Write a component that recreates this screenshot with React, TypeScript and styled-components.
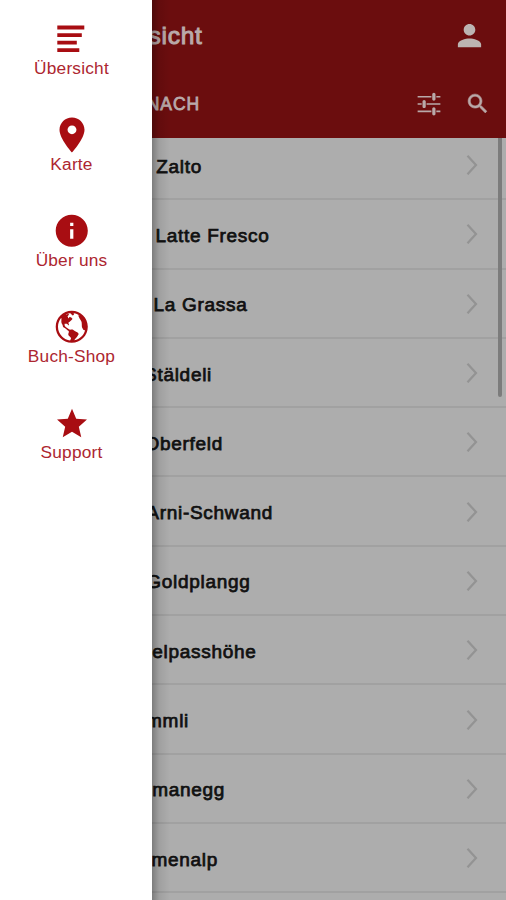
import React from "react";
import styled, { createGlobalStyle } from "styled-components";
import { IoMdPin, IoMdInformationCircle, IoMdGlobe, IoMdStar, IoMdPerson, IoMdSearch, IoMdOptions } from "react-icons/io";

const DRAWER = 152;

const GlobalStyle = createGlobalStyle`
  *, *::before, *::after { box-sizing: border-box; }
  body { margin: 0; background: #adadad; overflow: hidden; }
`;

const Screen = styled.div`
  width: 506px;
  height: 900px;
  display: grid;
  grid-template-columns: ${DRAWER}px 1fr;
  overflow: hidden;
  font-family: "Liberation Sans", Arial, sans-serif;
`;

const Drawer = styled.nav`
  background: #fff;
  display: flex;
  flex-direction: column;
  align-items: center;
  padding: 19px 9px 0 0;
`;

const DrawerItem = styled.a`
  height: 96px;
  display: flex;
  flex-direction: column;
  align-items: center;
  color: #a80d12;
`;

const IconSlot = styled.span`
  height: 40px;
  display: flex;
  align-items: center;
  justify-content: center;
`;

const DrawerLabel = styled.span`
  font-size: 17.3px;
  line-height: 18px;
  white-space: nowrap;
  letter-spacing: 0.2px;
  color: #ad2630;
`;

const Page = styled.main`
  position: relative;
  min-width: 0;
  height: 900px;
  overflow: hidden;
  background: #adadad;
`;

const DrawerShade = styled.div`
  position: absolute;
  inset: 0 auto 0 0;
  width: 18px;
  z-index: 3;
  background: linear-gradient(to right, rgba(0, 0, 0, 0.28), rgba(0, 0, 0, 0.08) 40%, transparent);
`;

const Header = styled.header`
  position: relative;
  z-index: 1;
  height: 138px;
  background: #6b0d0e;
  color: #b9a9a9;
`;

const Bar = styled.div<{ $height: number; $right: number }>`
  height: ${(p) => p.$height}px;
  display: flex;
  align-items: center;
  padding-right: ${(p) => p.$right}px;
`;

const Clip = styled.span<{ $end: number }>`
  width: ${(p) => p.$end - DRAWER}px;
  flex: none;
  display: flex;
  justify-content: flex-end;
  overflow: hidden;
  white-space: nowrap;
`;

const Title = styled.span`
  font-size: 24.5px;
  line-height: 30px;
  letter-spacing: 0.7px;
  -webkit-text-stroke: 1px;
`;

const Tab = styled.span`
  font-size: 17.5px;
  line-height: 22px;
  letter-spacing: 0.9px;
  -webkit-text-stroke: 0.8px;
`;

const Actions = styled.div<{ $gap?: number }>`
  margin-left: auto;
  display: flex;
  align-items: center;
  gap: ${(p) => p.$gap ?? 0}px;
`;

const SearchIcon = styled(IoMdSearch)`
  stroke: currentColor;
  stroke-width: 12px;
`;

const List = styled.ul`
  list-style: none;
  margin: -7px 0 0;
  padding: 0;
`;

const Row = styled.li`
  height: 69.3px;
  display: flex;
  align-items: center;
  justify-content: space-between;
  padding-right: 28px;
  border-bottom: 2px solid #a1a1a1;
`;

const Name = styled.span`
  font-size: 19px;
  line-height: 26px;
  padding-top: 4px;
  color: #111;
  letter-spacing: 0.7px;
  -webkit-text-stroke: 0.75px;
`;

const Scrollbar = styled.div`
  position: absolute;
  top: 138px;
  right: 4px;
  width: 4px;
  height: 259px;
  border-radius: 0 0 2px 2px;
  background: #7c7c7c;
  z-index: 2;
`;

const ListIcon = () => (
  <svg width="28" height="28" viewBox="0 0 28 28" fill="currentColor">
    <path d="M0.3 0.6h27v3.8h-27zM0.3 8.2h24.5v3.8h-24.5zM0.3 15.7h19.5v3.8h-19.5zM0.3 23.2h22v3.8h-22z" />
  </svg>
);

const Chevron = () => (
  <svg width="12" height="21" viewBox="0 0 12 21" fill="none" stroke="#939393" strokeWidth="2.2">
    <path d="M1.5 1.7 10 11 1.5 20.3" />
  </svg>
);

const menu = [
  { label: "Übersicht", icon: <ListIcon /> },
  { label: "Karte", icon: <IoMdPin size={40} /> },
  { label: "Über uns", icon: <IoMdInformationCircle size={39.5} /> },
  { label: "Buch-Shop", icon: <IoMdGlobe size={39.5} /> },
  { label: "Support", icon: <IoMdStar size={38} /> },
];

const rows = [
  { name: "Zalto", end: 202 },
  { name: "Latte Fresco", end: 269.5 },
  { name: "La Grassa", end: 247.5 },
  { name: "Stäldeli", end: 212 },
  { name: "Oberfeld", end: 223 },
  { name: "Arni-Schwand", end: 273 },
  { name: "Goldplangg", end: 250.5 },
  { name: "elpasshöhe", end: 256.5 },
  { name: "mmli", end: 189 },
  { name: "manegg", end: 225 },
  { name: "menalp", end: 218 },
  { name: "", end: 160 },
];

export default function App() {
  return (
    <>
      <GlobalStyle />
      <Screen>
        <Drawer>
          {menu.map((m) => (
            <DrawerItem key={m.label}>
              <IconSlot>{m.icon}</IconSlot>
              <DrawerLabel>{m.label}</DrawerLabel>
            </DrawerItem>
          ))}
        </Drawer>
        <Page>
          <DrawerShade />
          <Header>
            <Bar $height={71} $right={21}>
              <Clip $end={202.5}><Title>sicht</Title></Clip>
              <Actions><IoMdPerson size={31} color="#bcb4b2" /></Actions>
            </Bar>
            <Bar $height={65} $right={16}>
              <Clip $end={200}><Tab>NACH</Tab></Clip>
              <Actions $gap={23}>
                <IoMdOptions size={26} />
                <SearchIcon size={25} />
              </Actions>
            </Bar>
          </Header>
          <List>
            {rows.map((r, i) => (
              <Row key={i}>
                <Clip $end={r.end}><Name>{r.name}</Name></Clip>
                <Chevron />
              </Row>
            ))}
          </List>
          <Scrollbar />
        </Page>
      </Screen>
    </>
  );
}
